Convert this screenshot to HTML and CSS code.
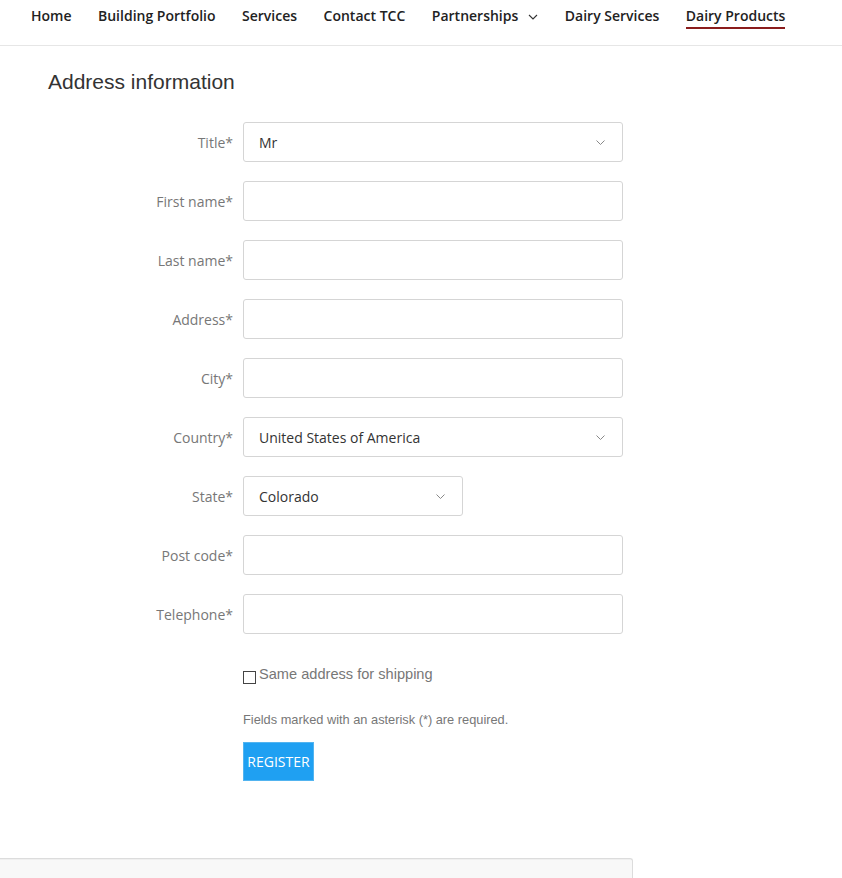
FILE: index.html
```html
<!DOCTYPE html>
<html lang="en">
<head>
	<meta charset="UTF-8">
	<title>Address information</title>
	<link rel="stylesheet" href="styles.css">
</head>
<body>
	<nav class="topnav">
		<a href="#" class="nav-link">Home</a>
		<a href="#" class="nav-link">Building Portfolio</a>
		<a href="#" class="nav-link">Services</a>
		<a href="#" class="nav-link">Contact TCC</a>
		<a href="#" class="nav-link has-menu">Partnerships
			<svg class="nav-caret" width="10" height="6" viewBox="0 0 10 6"><path d="M1 1l4 4 4-4" fill="none" stroke="#333" stroke-width="1.1"/></svg>
		</a>
		<a href="#" class="nav-link">Dairy Services</a>
		<a href="#" class="nav-link active">Dairy Products</a>
	</nav>

	<main class="content">
		<h2 class="section-title">Address information</h2>

		<form class="address-form">
			<div class="form-row">
				<label class="form-label">Title*</label>
				<div class="select-box">
					<span>Mr</span>
					<svg class="caret" width="9" height="5" viewBox="0 0 9 5"><path d="M.5.5l4 4 4-4" fill="none" stroke="#888" stroke-width="1"/></svg>
				</div>
			</div>
			<div class="form-row">
				<label class="form-label">First name*</label>
				<input class="text-input" type="text">
			</div>
			<div class="form-row">
				<label class="form-label">Last name*</label>
				<input class="text-input" type="text">
			</div>
			<div class="form-row">
				<label class="form-label">Address*</label>
				<input class="text-input" type="text">
			</div>
			<div class="form-row">
				<label class="form-label">City*</label>
				<input class="text-input" type="text">
			</div>
			<div class="form-row">
				<label class="form-label">Country*</label>
				<div class="select-box">
					<span>United States of America</span>
					<svg class="caret" width="9" height="5" viewBox="0 0 9 5"><path d="M.5.5l4 4 4-4" fill="none" stroke="#888" stroke-width="1"/></svg>
				</div>
			</div>
			<div class="form-row">
				<label class="form-label">State*</label>
				<div class="select-box short">
					<span>Colorado</span>
					<svg class="caret" width="9" height="5" viewBox="0 0 9 5"><path d="M.5.5l4 4 4-4" fill="none" stroke="#888" stroke-width="1"/></svg>
				</div>
			</div>
			<div class="form-row">
				<label class="form-label">Post code*</label>
				<input class="text-input" type="text">
			</div>
			<div class="form-row">
				<label class="form-label">Telephone*</label>
				<input class="text-input" type="text">
			</div>

			<div class="form-extra">
				<label class="check-row">
					<span class="check-box"></span>
					Same address for shipping
				</label>
				<p class="form-note">Fields marked with an asterisk (*) are required.</p>
				<button type="button" class="btn-register">Register</button>
			</div>
		</form>
	</main>

	<div class="footer-panel"></div>
</body>
</html>
```

FILE: styles.css
```css
html {
	background: white;
}
body {
	margin: 0;
	padding: 0;
	font-family: "Open Sans", sans-serif;
	color: #333;
}

/* ----- TOP NAVIGATION ----- */
.topnav {
	display: flex;
	align-items: flex-start;
	gap: 26.5px;
	height: 45px;
	padding-left: 31px;
	border-bottom: 1px solid #e6e6e6;
	box-sizing: content-box;
}
.nav-link {
	display: flex;
	align-items: center;
	gap: 10px;
	padding-top: 5px;
	height: 22px;
	font-size: 14px;
	font-weight: 600;
	line-height: 22px;
	color: #222;
	text-decoration: none;
	border-bottom: 2px solid transparent;
}
.nav-link.active {
	border-bottom-color: #8a1c1c;
}
.nav-caret {
	margin-top: 1px;
}

/* ----- FORM ----- */
.content {
	padding-left: 48px;
}
.section-title {
	margin: 24px 0 29px;
	font-family: "Liberation Sans", Arial, sans-serif;
	font-size: 21px;
	font-weight: normal;
	line-height: 23px;
	color: #333;
}
.address-form {
	width: 575px;
}
.form-row {
	display: flex;
	align-items: center;
	height: 40px;
	margin-bottom: 19px;
}
.form-label {
	width: 185px;
	padding-right: 10px;
	text-align: right;
	font-size: 14px;
	color: #777;
}
.text-input,
.select-box {
	box-sizing: border-box;
	width: 380px;
	height: 40px;
	border: 1px solid #d5d5d5;
	border-radius: 3px;
	background: white;
	font-family: "Open Sans", sans-serif;
	font-size: 14px;
	color: #333;
}
.text-input {
	padding: 0 15px;
}
.select-box {
	display: flex;
	align-items: center;
	justify-content: space-between;
	padding: 0 17px 0 15px;
}
.select-box.short {
	width: 220px;
}

.form-extra {
	padding-left: 195px;
	padding-top: 13px;
}
.check-row {
	display: flex;
	align-items: flex-start;
	gap: 3px;
	font-family: "Liberation Sans", Arial, sans-serif;
	font-size: 14.6px;
	line-height: 17px;
	color: #777;
}
.check-box {
	width: 11px;
	height: 11px;
	margin-top: 5px;
	border: 1px solid #444;
	background: white;
}
.form-note {
	margin: 28px 0 15px;
	font-family: "Liberation Sans", Arial, sans-serif;
	font-size: 12.8px;
	line-height: 15px;
	color: #777;
}
.btn-register {
	width: 71px;
	height: 39px;
	padding: 0;
	border: 1px solid #52b4f0;
	background: #1fa0f2;
	color: white;
	font-family: "Open Sans", sans-serif;
	font-size: 14px;
	text-transform: uppercase;
}

/* ----- FOOTER PANEL ----- */
.footer-panel {
	margin-top: 77px;
	width: 632px;
	height: 40px;
	background: #f8f8f8;
	border-top: 1px solid #dcdcdc;
	border-right: 1px solid #dcdcdc;
	border-top-right-radius: 3px;
	box-shadow: inset 0 3px 0 -2px #efefef;
}
```
